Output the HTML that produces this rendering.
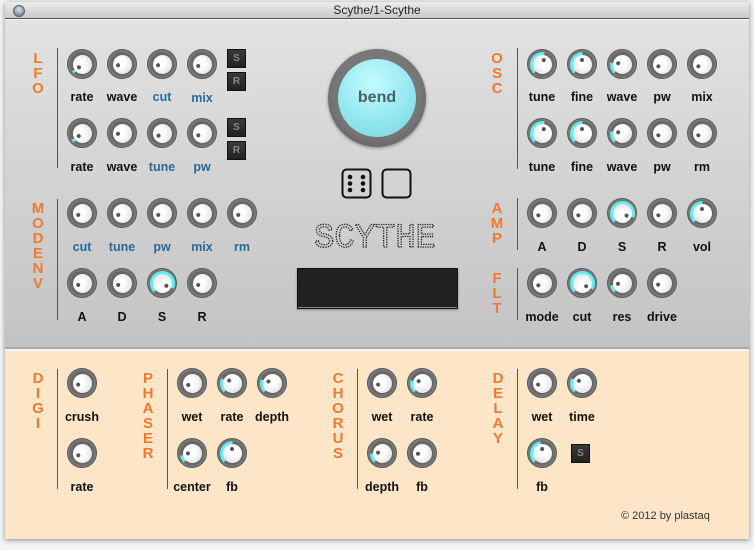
<!DOCTYPE html>
<html><head><meta charset="utf-8"><style>
*{margin:0;padding:0;box-sizing:border-box}
body{width:754px;height:550px;background:#f4f4f4;position:relative;overflow:hidden;font-family:"Liberation Sans",sans-serif}
#win{position:absolute;left:5px;top:2px;width:744px;height:537px;box-shadow:0 1px 5px rgba(0,0,0,.45);overflow:hidden}
#tb{position:absolute;left:0;top:0;width:744px;height:17px;background:linear-gradient(#ececec,#c9c9c9);border-bottom:1px solid #555;text-align:center;font-size:12px;line-height:17px;color:#222}
#tb b{position:absolute;left:8px;top:3px;width:12px;height:12px;border-radius:50%;background:radial-gradient(circle at 50% 35%,#dfe8ee,#7f8d96 70%);border:1px solid #5a646b}
#top{position:absolute;left:0;top:18px;width:744px;height:329px;background:linear-gradient(#e2e2e2,#c3c3c3);border-bottom:2px solid #a8a8a8}
#bot{position:absolute;left:0;top:349px;width:744px;height:188px;background:#fde6c8}
.a{position:absolute}
.L{position:absolute;color:#f07a2e;font-weight:bold;font-size:15px;line-height:15px;width:16px;text-align:center}
.v{position:absolute;width:1px;background:#555}
.t{position:absolute;width:70px;text-align:center;font-weight:bold;font-size:12.5px;color:#111}
.bl{color:#2b6996}
.k{position:absolute;width:30px;height:30px;border-radius:50%;background:radial-gradient(circle,#666 55%,#8c8c8c 78%,#6a6a6a);border:1px solid #5a5a5a}
#bot .k{background:radial-gradient(circle,#766b5b 55%,#a39785 78%,#7d7262);border-color:#6b604f}
.k:before{content:"";position:absolute;inset:1.5px;border-radius:50%;background:conic-gradient(from 225deg,#66ecf0 0 var(--c,0deg),transparent 0)}
.k i{position:absolute;left:4.5px;top:4.5px;width:19px;height:19px;border-radius:50%;background:radial-gradient(circle at 62% 35%,#fff 30%,#e6e6e6 75%,#d0d0d0);transform:rotate(var(--a,-120deg))}
.k i:after{content:"";position:absolute;left:7.5px;top:3px;width:4px;height:4px;border-radius:50%;background:#555}
.sb{position:absolute;width:19px;height:19px;background:linear-gradient(#3a3a3a,#222);border:1px solid #111;color:#888;font-size:10px;font-weight:bold;text-align:center;line-height:17px}
</style></head><body>
<div id="win">
<div id="tb"><b></b>Scythe/1-Scythe</div>
<div id="top"></div>
<div id="bot"></div>
</div>

<div class="L" style="left:30px;top:51px">L<br>F<br>O</div>
<div class="L" style="left:30px;top:201px">M<br>O<br>D<br>E<br>N<br>V</div>
<div class="L" style="left:489px;top:51px">O<br>S<br>C</div>
<div class="L" style="left:489px;top:201px">A<br>M<br>P</div>
<div class="L" style="left:489px;top:271px">F<br>L<br>T</div>
<div class="L" style="left:30px;top:371px">D<br>I<br>G<br>I</div>
<div class="L" style="left:140px;top:371px">P<br>H<br>A<br>S<br>E<br>R</div>
<div class="L" style="left:330px;top:371px">C<br>H<br>O<br>R<br>U<br>S</div>
<div class="L" style="left:490px;top:371px">D<br>E<br>L<br>A<br>Y</div>

<div class="v" style="left:57px;top:48px;height:120px"></div>
<div class="v" style="left:57px;top:199px;height:121px"></div>
<div class="v" style="left:517px;top:48px;height:121px"></div>
<div class="v" style="left:517px;top:198px;height:52px"></div>
<div class="v" style="left:517px;top:268px;height:52px"></div>
<div class="v" style="left:57px;top:369px;height:120px"></div>
<div class="v" style="left:167px;top:369px;height:120px"></div>
<div class="v" style="left:357px;top:369px;height:120px"></div>
<div class="v" style="left:517px;top:369px;height:120px"></div>

<div class="k" style="left:67px;top:49px;--a:-135deg;--c:12deg"><i></i></div>
<div class="k" style="left:107px;top:49px;--a:-105deg"><i></i></div>
<div class="k" style="left:147px;top:49px;--a:-105deg"><i></i></div>
<div class="k" style="left:187px;top:49px;--a:-115deg"><i></i></div>
<div class="t" style="left:47px;top:90px">rate</div>
<div class="t" style="left:87px;top:90px">wave</div>
<div class="t bl" style="left:127px;top:90px">cut</div>
<div class="t bl" style="left:167px;top:91px">mix</div>
<div class="sb" style="left:227px;top:49px">S</div>
<div class="sb" style="left:227px;top:72px">R</div>
<div class="k" style="left:67px;top:118px;--a:-130deg;--c:15deg"><i></i></div>
<div class="k" style="left:107px;top:118px;--a:-100deg"><i></i></div>
<div class="k" style="left:147px;top:118px;--a:-125deg"><i></i></div>
<div class="k" style="left:187px;top:118px;--a:-120deg"><i></i></div>
<div class="t" style="left:47px;top:160px">rate</div>
<div class="t" style="left:87px;top:160px">wave</div>
<div class="t bl" style="left:127px;top:160px">tune</div>
<div class="t bl" style="left:167px;top:160px">pw</div>
<div class="sb" style="left:227px;top:118px">S</div>
<div class="sb" style="left:227px;top:141px">R</div>

<div class="k" style="left:67px;top:198px;--a:-115deg"><i></i></div>
<div class="k" style="left:107px;top:198px;--a:-115deg"><i></i></div>
<div class="k" style="left:147px;top:198px;--a:-115deg"><i></i></div>
<div class="k" style="left:187px;top:198px;--a:-115deg"><i></i></div>
<div class="k" style="left:227px;top:198px;--a:-115deg"><i></i></div>
<div class="t bl" style="left:47px;top:240px">cut</div>
<div class="t bl" style="left:87px;top:240px">tune</div>
<div class="t bl" style="left:127px;top:240px">pw</div>
<div class="t bl" style="left:167px;top:240px">mix</div>
<div class="t bl" style="left:207px;top:240px">rm</div>
<div class="k" style="left:67px;top:268px;--a:-115deg"><i></i></div>
<div class="k" style="left:107px;top:268px;--a:-115deg"><i></i></div>
<div class="k" style="left:147px;top:268px;--a:115deg;--c:250deg"><i></i></div>
<div class="k" style="left:187px;top:268px;--a:-115deg"><i></i></div>
<div class="t" style="left:47px;top:310px">A</div>
<div class="t" style="left:87px;top:310px">D</div>
<div class="t" style="left:127px;top:310px">S</div>
<div class="t" style="left:167px;top:310px">R</div>

<div class="k" style="left:527px;top:49px;--a:10deg;--c:145deg"><i></i></div>
<div class="k" style="left:567px;top:49px;--a:0deg;--c:135deg"><i></i></div>
<div class="k" style="left:607px;top:49px;--a:-80deg;--c:55deg"><i></i></div>
<div class="k" style="left:647px;top:49px;--a:-120deg"><i></i></div>
<div class="k" style="left:687px;top:49px;--a:-120deg"><i></i></div>
<div class="t" style="left:507px;top:90px">tune</div>
<div class="t" style="left:547px;top:90px">fine</div>
<div class="t" style="left:587px;top:90px">wave</div>
<div class="t" style="left:627px;top:90px">pw</div>
<div class="t" style="left:667px;top:90px">mix</div>
<div class="k" style="left:527px;top:118px;--a:10deg;--c:145deg"><i></i></div>
<div class="k" style="left:567px;top:118px;--a:0deg;--c:135deg"><i></i></div>
<div class="k" style="left:607px;top:118px;--a:-80deg;--c:55deg"><i></i></div>
<div class="k" style="left:647px;top:118px;--a:-120deg"><i></i></div>
<div class="k" style="left:687px;top:118px;--a:-120deg"><i></i></div>
<div class="t" style="left:507px;top:160px">tune</div>
<div class="t" style="left:547px;top:160px">fine</div>
<div class="t" style="left:587px;top:160px">wave</div>
<div class="t" style="left:627px;top:160px">pw</div>
<div class="t" style="left:667px;top:160px">rm</div>

<div class="k" style="left:527px;top:198px;--a:-120deg"><i></i></div>
<div class="k" style="left:567px;top:198px;--a:-120deg"><i></i></div>
<div class="k" style="left:607px;top:198px;--a:110deg;--c:245deg"><i></i></div>
<div class="k" style="left:647px;top:198px;--a:-120deg"><i></i></div>
<div class="k" style="left:687px;top:198px;--a:0deg;--c:135deg"><i></i></div>
<div class="t" style="left:507px;top:240px">A</div>
<div class="t" style="left:547px;top:240px">D</div>
<div class="t" style="left:587px;top:240px">S</div>
<div class="t" style="left:627px;top:240px">R</div>
<div class="t" style="left:667px;top:240px">vol</div>

<div class="k" style="left:527px;top:268px;--a:-120deg"><i></i></div>
<div class="k" style="left:567px;top:268px;--a:120deg;--c:255deg"><i></i></div>
<div class="k" style="left:607px;top:268px;--a:-100deg;--c:35deg"><i></i></div>
<div class="k" style="left:647px;top:268px;--a:-110deg"><i></i></div>
<div class="t" style="left:507px;top:310px">mode</div>
<div class="t" style="left:547px;top:310px">cut</div>
<div class="t" style="left:587px;top:310px">res</div>
<div class="t" style="left:627px;top:310px">drive</div>

<div class="a" style="left:328px;top:49px;width:98px;height:98px;border-radius:50%;background:radial-gradient(circle at 50% 45%,#777 60%,#555 95%);box-shadow:0 1px 3px rgba(0,0,0,.4)"></div>
<div class="a" style="left:338px;top:59px;width:78px;height:78px;border-radius:50%;background:radial-gradient(circle at 45% 30%,#c4fbff,#8fe6ee 60%,#7fd3dc);text-align:center;line-height:78px;font-weight:bold;font-size:16px;color:#4e5f62">bend</div>
<svg class="a" style="left:340px;top:167px" width="74" height="34" viewBox="0 0 74 34">
<rect x="2.5" y="2.5" width="28" height="28" rx="4" fill="none" stroke="#111" stroke-width="2"/>
<g fill="#111"><circle cx="10" cy="10" r="2.3"/><circle cx="23" cy="10" r="2.3"/><circle cx="10" cy="16.5" r="2.3"/><circle cx="23" cy="16.5" r="2.3"/><circle cx="10" cy="23" r="2.3"/><circle cx="23" cy="23" r="2.3"/></g>
<rect x="42.5" y="2.5" width="28" height="28" rx="4" fill="none" stroke="#111" stroke-width="2"/>
</svg>
<svg class="a" style="left:310px;top:218px" width="132" height="34">
<text x="4" y="29" font-family="Liberation Mono,monospace" font-size="34" textLength="122" lengthAdjust="spacingAndGlyphs" fill="none" stroke="#222" stroke-width="1.3" stroke-dasharray="1.3 1.1">SCYTHE</text>
</svg>
<div class="a" style="left:297px;top:268px;width:161px;height:41px;background:#222;border:1px solid #111;box-shadow:0 -1px 0 #888 inset,0 1px 2px rgba(0,0,0,.3)"></div>

<div class="k" style="left:67px;top:368px;--a:-110deg"><i></i></div>
<div class="t" style="left:47px;top:410px">crush</div>
<div class="k" style="left:67px;top:438px;--a:-120deg"><i></i></div>
<div class="t" style="left:47px;top:480px">rate</div>
<div class="k" style="left:177px;top:368px;--a:-115deg"><i></i></div>
<div class="k" style="left:217px;top:368px;--a:-55deg;--c:70deg"><i></i></div>
<div class="k" style="left:257px;top:368px;--a:-70deg;--c:65deg"><i></i></div>
<div class="t" style="left:157px;top:410px">wet</div>
<div class="t" style="left:197px;top:410px">rate</div>
<div class="t" style="left:237px;top:410px">depth</div>
<div class="k" style="left:177px;top:438px;--a:-95deg;--c:35deg"><i></i></div>
<div class="k" style="left:217px;top:438px;--a:0deg;--c:135deg"><i></i></div>
<div class="t" style="left:157px;top:480px">center</div>
<div class="t" style="left:197px;top:480px">fb</div>
<div class="k" style="left:367px;top:368px;--a:-110deg"><i></i></div>
<div class="k" style="left:407px;top:368px;--a:-65deg;--c:60deg"><i></i></div>
<div class="t" style="left:347px;top:410px">wet</div>
<div class="t" style="left:387px;top:410px">rate</div>
<div class="k" style="left:367px;top:438px;--a:-85deg;--c:45deg"><i></i></div>
<div class="k" style="left:407px;top:438px;--a:-100deg"><i></i></div>
<div class="t" style="left:347px;top:480px">depth</div>
<div class="t" style="left:387px;top:480px">fb</div>
<div class="k" style="left:527px;top:368px;--a:-110deg"><i></i></div>
<div class="k" style="left:567px;top:368px;--a:-60deg;--c:70deg"><i></i></div>
<div class="t" style="left:507px;top:410px">wet</div>
<div class="t" style="left:547px;top:410px">time</div>
<div class="k" style="left:527px;top:438px;--a:-10deg;--c:125deg"><i></i></div>
<div class="sb" style="left:571px;top:444px">S</div>
<div class="t" style="left:507px;top:480px">fb</div>

<div class="a" style="left:621px;top:510px;font-size:11px;color:#333">© 2012 by plastaq</div>
</body></html>
